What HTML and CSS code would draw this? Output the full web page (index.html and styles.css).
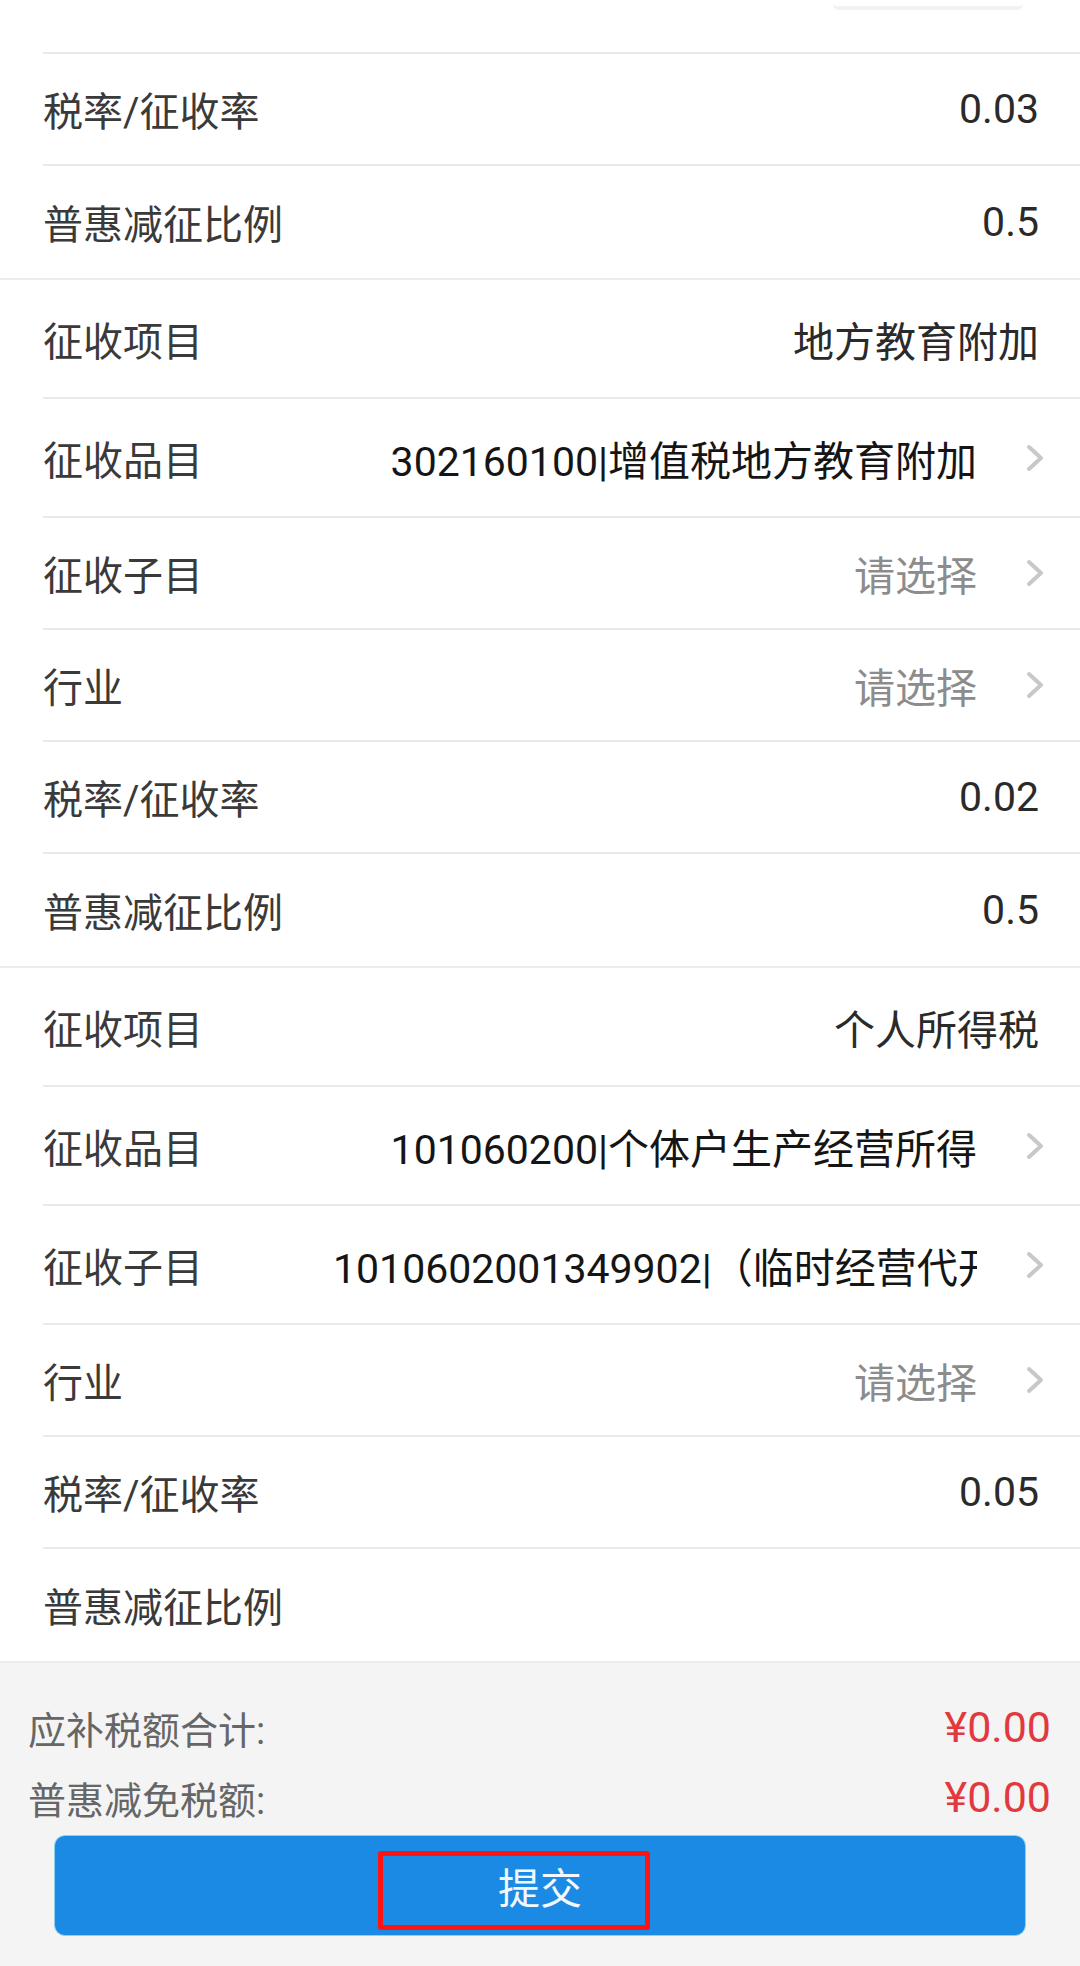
FILE: index.html
```html
<!doctype html>
<html>
    <head>
        <meta charset="utf-8">
        <title>申报</title>
        <meta name="viewport" content="width=device-width, initial-scale=1.0, user-scalable=no" />
        <link rel="stylesheet" href="styles.css">
    </head>
    <body>
        <div class="group">
            <div class="row row-top"><span class="input-ghost"></span></div>
            <div class="row"><span class="label">税率/征收率</span><span class="value">0.03</span></div>
            <div class="row"><span class="label">普惠减征比例</span><span class="value">0.5</span></div>
        </div>

        <div class="group">
            <div class="row row-tall"><span class="label">征收项目</span><span class="value">地方教育附加</span></div>
            <div class="row row-tall row-link"><span class="label">征收品目</span><span class="value dark">302160100|增值税地方教育附加</span><svg class="arrow" viewBox="0 0 20 28"><polyline points="4,3 16,14 4,25"/></svg></div>
            <div class="row row-link"><span class="label">征收子目</span><span class="value hint">请选择</span><svg class="arrow" viewBox="0 0 20 28"><polyline points="4,3 16,14 4,25"/></svg></div>
            <div class="row row-link"><span class="label">行业</span><span class="value hint">请选择</span><svg class="arrow" viewBox="0 0 20 28"><polyline points="4,3 16,14 4,25"/></svg></div>
            <div class="row"><span class="label">税率/征收率</span><span class="value">0.02</span></div>
            <div class="row"><span class="label">普惠减征比例</span><span class="value">0.5</span></div>
        </div>

        <div class="group">
            <div class="row row-tall"><span class="label">征收项目</span><span class="value">个人所得税</span></div>
            <div class="row row-tall row-link"><span class="label">征收品目</span><span class="value dark">101060200|个体户生产经营所得</span><svg class="arrow" viewBox="0 0 20 28"><polyline points="4,3 16,14 4,25"/></svg></div>
            <div class="row row-tall row-link"><span class="label">征收子目</span><span class="value dark">1010602001349902|（临时经营代开具发票）</span><svg class="arrow" viewBox="0 0 20 28"><polyline points="4,3 16,14 4,25"/></svg></div>
            <div class="row row-link"><span class="label">行业</span><span class="value hint">请选择</span><svg class="arrow" viewBox="0 0 20 28"><polyline points="4,3 16,14 4,25"/></svg></div>
            <div class="row"><span class="label">税率/征收率</span><span class="value">0.05</span></div>
            <div class="row"><span class="label">普惠减征比例</span><span class="value"></span></div>
        </div>

        <div class="footer">
            <div class="sum"><span>应补税额合计:</span><span class="money">¥0.00</span></div>
            <div class="sum"><span>普惠减免税额:</span><span class="money">¥0.00</span></div>
            <button class="submit">提交<span class="mark"></span></button>
        </div>
    </body>
</html>
```

FILE: styles.css
```css
body {
    margin: 0;
    background-color: #fff;
    font-family: Roboto, "Noto Sans CJK SC", sans-serif;
    color: #333;
}
.group {
    border-bottom: 2px solid #ececec;
}
.group:last-of-type {
    border-bottom: none;
}
.row {
    display: flex;
    align-items: center;
    box-sizing: border-box;
    height: 112px;
    margin-left: 43px;
    padding-right: 41px;
    border-bottom: 2px solid #e9e9e9;
    font-size: 40px;
}
.row:last-child {
    border-bottom: none;
}
.row-tall {
    height: 119px;
}
.row-top {
    height: 54px;
    align-items: flex-start;
}
.row-link {
    padding-right: 35px;
}
.label {
    flex: 0 0 290px;
    color: #3a3a3a;
}
.value {
    flex: 1;
    min-width: 0;
    text-align: right;
    white-space: nowrap;
    overflow: hidden;
    font-size: 41px;
    color: #2a2a2a;
}
.value.dark {
    color: #151515;
}
.value.hint {
    color: #8c8c8c;
}
.arrow {
    flex: none;
    width: 20px;
    height: 28px;
    margin-left: 48px;
}
.arrow polyline {
    fill: none;
    stroke: #c8c8c8;
    stroke-width: 4;
    stroke-linecap: round;
    stroke-linejoin: round;
}
.input-ghost {
    margin-left: auto;
    margin-right: 16px;
    width: 190px;
    height: 6px;
    border-bottom: 4px solid #f2f2f2;
    border-radius: 0 0 6px 6px;
}
.footer {
    background-color: #f4f4f4;
    padding: 29px 29px 33px 28px;
}
.sum {
    display: flex;
    justify-content: space-between;
    align-items: center;
    height: 70px;
    font-size: 38px;
    color: #666;
}
.money {
    font-size: 43px;
    color: #e2393f;
}
.submit {
    position: relative;
    display: block;
    box-sizing: border-box;
    width: calc(100% - 51px);
    height: 101px;
    margin: 3px 0 0 26px;
    border: 1px solid #8fd0ee;
    border-radius: 11px;
    background-color: #1a8ae4;
    color: #f2f8fc;
    font-family: Roboto, "Noto Sans CJK SC", sans-serif;
    font-size: 42px;
}
/* red highlight box drawn over the button */
.mark {
    position: absolute;
    left: 323px;
    top: 15px;
    width: 272px;
    height: 79px;
    box-sizing: border-box;
    border: 5px solid #ff1414;
    border-radius: 3px;
}
```
